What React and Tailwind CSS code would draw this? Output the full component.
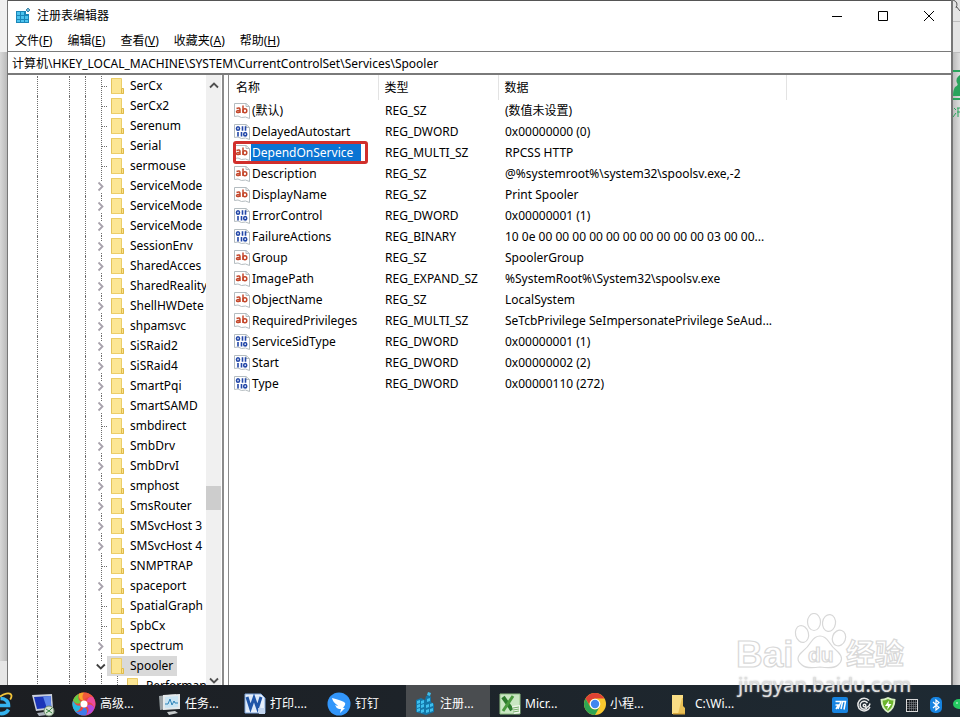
import React from 'react';

const MENUS = [
  { label: '文件', key: 'F' },
  { label: '编辑', key: 'E' },
  { label: '查看', key: 'V' },
  { label: '收藏夹', key: 'A' },
  { label: '帮助', key: 'H' }
];

const TREE = [
  { name: 'SerCx' },
  { name: 'SerCx2' },
  { name: 'Serenum' },
  { name: 'Serial' },
  { name: 'sermouse' },
  { name: 'ServiceMode', children: true },
  { name: 'ServiceMode', children: true },
  { name: 'ServiceMode', children: true },
  { name: 'SessionEnv', children: true },
  { name: 'SharedAcces', children: true },
  { name: 'SharedReality', children: true },
  { name: 'ShellHWDete', children: true },
  { name: 'shpamsvc', children: true },
  { name: 'SiSRaid2', children: true },
  { name: 'SiSRaid4', children: true },
  { name: 'SmartPqi', children: true },
  { name: 'SmartSAMD', children: true },
  { name: 'smbdirect' },
  { name: 'SmbDrv', children: true },
  { name: 'SmbDrvI', children: true },
  { name: 'smphost', children: true },
  { name: 'SmsRouter', children: true },
  { name: 'SMSvcHost 3', children: true },
  { name: 'SMSvcHost 4', children: true },
  { name: 'SNMPTRAP' },
  { name: 'spaceport', children: true },
  { name: 'SpatialGraph' },
  { name: 'SpbCx' },
  { name: 'spectrum', children: true },
  { name: 'Spooler', children: true, open: true },
  { name: 'Performan', nested: true }
];

const VALUES = [
  { name: '(默认)', type: 'REG_SZ', data: '(数值未设置)' },
  { name: 'DelayedAutostart', type: 'REG_DWORD', data: '0x00000000 (0)' },
  { name: 'DependOnService', type: 'REG_MULTI_SZ', data: 'RPCSS HTTP', selected: true },
  { name: 'Description', type: 'REG_SZ', data: '@%systemroot%\\system32\\spoolsv.exe,-2' },
  { name: 'DisplayName', type: 'REG_SZ', data: 'Print Spooler' },
  { name: 'ErrorControl', type: 'REG_DWORD', data: '0x00000001 (1)' },
  { name: 'FailureActions', type: 'REG_BINARY', data: '10 0e 00 00 00 00 00 00 00 00 00 00 03 00 00...' },
  { name: 'Group', type: 'REG_SZ', data: 'SpoolerGroup' },
  { name: 'ImagePath', type: 'REG_EXPAND_SZ', data: '%SystemRoot%\\System32\\spoolsv.exe' },
  { name: 'ObjectName', type: 'REG_SZ', data: 'LocalSystem' },
  { name: 'RequiredPrivileges', type: 'REG_MULTI_SZ', data: 'SeTcbPrivilege SeImpersonatePrivilege SeAud...' },
  { name: 'ServiceSidType', type: 'REG_DWORD', data: '0x00000001 (1)' },
  { name: 'Start', type: 'REG_DWORD', data: '0x00000002 (2)' },
  { name: 'Type', type: 'REG_DWORD', data: '0x00000110 (272)' }
];

// Window and tree icons
const RegeditIcon = () => (
  <svg className="h-4 w-4" viewBox="0 0 16 16">
    <path d="M1 3h10v3h3v9H1z" fill="#1b86b8" />
    <path d="M2 4h3v3H2zM6 4h3v3H6zM2 8h3v3H2zM6 8h3v3H6zM10 8h3v3h-3zM2 12h3v2H2zM6 12h3v2H6zM10 12h3v2h-3z" fill="#4cc3ee" />
    <path d="M13 0l2 2-2 2-2-2z" fill="#6fb7d6" stroke="#28749a" strokeWidth=".8" />
  </svg>
);

const FolderIcon = () => (
  <svg className="h-4 w-[13px] shrink-0" viewBox="0 0 13 16">
    <path d="M.5.5h10v9.500l2 1v4.500H.5z" fill="#fce694" stroke="#ecce68" />
    <path d="M10.500 10.500h2v5h-2z" fill="#fbe08a" stroke="#dfbb4b" />
    <path d="M.5.500v15" stroke="#e3c35c" />
  </svg>
);

const NodeGlyph = ({ item }) => (
  <svg className="h-5 w-[11px] shrink-0" viewBox="0 0 11 20" fill="none">
    {item.children ? (
      <path d="M5.500 0v5M5.500 17v3" stroke="#6e6e6e" strokeDasharray="1 1" />
    ) : (
      <path d="M5.500 0v20M6 10.500h5" stroke="#6e6e6e" strokeDasharray="1 1" />
    )}
    {item.children && !item.open && <path d="M2.500 6.500l4 4-4 4" stroke="#a8a2ac" strokeWidth="1.800" />}
    {item.open && <path d="M.8 8.500l4 4 4-4" stroke="#404040" strokeWidth="1.800" />}
  </svg>
);

const ValueIcon = ({ type }) => {
  const binary = type === 'REG_DWORD' || type === 'REG_BINARY';
  return (
    <svg className="h-4 w-4 shrink-0" viewBox="0 0 16 16" fill="none">
      <path d="M.5.500h11.500l3.500 3v12l-4-1.500-4 .5-3.500-1.500-3.500.5z" fill="#fff" stroke="#b4bcc0" />
      <path d="M12 .5v3h3.500" stroke="#b4bcc0" />
      {binary ? (
        <g stroke="#2347a8" strokeWidth="1.600">
          <ellipse cx="4" cy="4.500" rx="1.500" ry="1.700" />
          <path d="M8.500 2.200v4.500M11.500 2.200v4.500M4 8v4.500M7.500 8v4.500" />
          <ellipse cx="11.200" cy="10.200" rx="1.500" ry="1.700" />
        </g>
      ) : (
        <g stroke="#c4472b" strokeWidth="1.500">
          <path d="M2.500 5.500q3.500-1.500 3.500 1V10M6 7.500q-3.500-.3-3.500 1.200t3.500.3" />
          <path d="M9 2.500V10" />
          <ellipse cx="10.900" cy="7.700" rx="1.900" ry="2" />
        </g>
      )}
    </svg>
  );
};

// Taskbar icons
const ExplorerBrowserIcon = () => (
  <svg className="h-6 w-[13px]" viewBox="11 0 13 24" fill="none">
    <path d="M4 13.500h15.500C19.500 9 16 6.500 11.500 6.500M19.500 17.500c-2 3.500-5 4.500-9 4" stroke="#35b3ee" strokeWidth="3.600" />
    <path d="M11 4.500c4-3 9-4 11-2 1 1.200.5 3-.8 5" stroke="#f3c53b" strokeWidth="1.800" />
  </svg>
);

const MonitorIcon = () => (
  <svg className="h-6 w-6" viewBox="0 0 24 24">
    <path d="M0 2l20-1 1 15-17 2z" fill="#c9cfdd" />
    <path d="M2 4l16.500-1 .8 11.500L5 16z" fill="#1c35b8" />
    <path d="M11 3.500l7.500-.5.800 11.500-4.500.4z" fill="#5e86ea" />
    <path d="M5 20l7-1 3 3-8 1z" fill="#aab1bb" />
    <circle cx="17" cy="18" r="5" fill="#d6e3d2" stroke="#718a70" />
    <path d="M14 16l3 2-3 2M20 15l-3 3 3 2" stroke="#378344" fill="none" />
  </svg>
);

const PinwheelIcon = () => (
  <svg className="-ml-0.5 h-6 w-6" viewBox="0 0 24 24">
    <circle cx="12" cy="12" r="11.500" fill="#e8483f" />
    <path d="M12 .5A11.500 11.500 0 0 1 21 5Q14 4 12 9 8 5 12 .5" fill="#f05a3c" />
    <path d="M21 5a11.500 11.500 0 0 1 1.500 11Q20 9 14.500 10 16 4 21 5" fill="#ec4a9c" />
    <path d="M22.500 16A11.500 11.500 0 0 1 14 23.300Q19 17 14.500 14 19 10 22.500 16" fill="#b348e0" />
    <path d="M14 23.300A11.500 11.500 0 0 1 3.500 20Q11 20 11.500 15 17 17 14 23.300" fill="#3f7bea" />
    <path d="M3.500 20A11.500 11.500 0 0 1 1 8.500Q4 15 9 13.500 8 19 3.500 20" fill="#27b7df" />
    <path d="M1 8.500A11.500 11.500 0 0 1 7 1.700Q5 8 9.500 10 5 14 1 8.500" fill="#63cc45" />
    <path d="M7 1.700A11.500 11.500 0 0 1 12 .5Q9 5 12 9 6 8 7 1.700" fill="#f7a62a" />
    <circle cx="12" cy="12" r="3.500" fill="#fff" />
  </svg>
);

const TaskManagerIcon = () => (
  <svg className="h-6 w-[22px]" viewBox="0 0 22 24">
    <path d="M0 4l17-2v14L1 18z" fill="#9aa1a5" />
    <path d="M4 3l17-1v15l-17 1z" fill="#e4e9eb" />
    <path d="M6 5l13-1v11L6 16z" fill="#c9e4f3" />
    <path d="M6 12h3l2-5 2 6 2-4 1 2h3" stroke="#2d83b8" fill="none" />
    <path d="M8 20l8-1 3 2-9 2z" fill="#c8cccd" />
  </svg>
);

const WordIcon = () => (
  <svg className="h-6 w-[22px]" viewBox="0 0 22 24">
    <path d="M1 2h16l4 4v15H1z" fill="#e8f0fb" stroke="#7ea6dc" />
    <path d="M2 4h15v14H2z" fill="#dbe8f8" />
    <path d="M3 5l3.500 11L10 6l3.500 10L17 5" stroke="#1f55a8" strokeWidth="3" fill="none" />
    <path d="M14 16h7v6h-6z" fill="#c2d5ef" />
  </svg>
);

const DingIcon = () => (
  <svg className="-ml-0.5 h-6 w-6" viewBox="0 0 24 24">
    <circle cx="12" cy="12" r="11.500" fill="#3296fa" />
    <path d="M5 6q8 2 12 4 2 1 1 3l-2 3h2l-5 5 1-4h-2q-3-1-4-4 2 1 3 .5Q6 11 5 6z" fill="#fff" />
  </svg>
);

const CubesIcon = () => (
  <svg className="h-6 w-[22px]" viewBox="0 0 22 24">
    <path d="M2 8l5-2 4 2 1-4 3-1 2 2v5l3 2v8l-8 3-10-3z" fill="#1376a8" />
    <path d="M3 9l3-1v3l-3 1zM7 9l3-1v3l-3 1zM3 13l3-1v3l-3 1zM7 13l3-1v3l-3 1zM3 17l3-1v3l-3 1zM7 18l3-1v3l-3 1zM12 13l3-1v3l-3 1zM16 12l3-1v3l-3 1zM12 18l3-1v3l-3 1zM16 17l3-1v3l-3 1zM13 7l3-1v3l-3 1zM14 0l3 1-1 3-3-1z" fill="#3fc0ee" />
  </svg>
);

const ExcelIcon = () => (
  <svg className="h-6 w-[22px]" viewBox="0 0 22 24">
    <path d="M1 2h20v20H1z" fill="#c9e6c2" stroke="#8ebf83" />
    <path d="M4 5l9 13" stroke="#2c7a2c" strokeWidth="4" />
    <path d="M14 4L4 19" stroke="#4a9a3e" strokeWidth="3" />
    <path d="M13 14l8-1v8l-6 1z" fill="#eef6ea" />
    <path d="M14 16l6-1M14 18l6-1M14 20l6-1" stroke="#75ad69" />
  </svg>
);

const ChromeIcon = () => (
  <svg className="h-6 w-[22px]" viewBox="0 0 22 24">
    <circle cx="11" cy="12" r="11" fill="#f9c92e" />
    <path d="M1.500 6.500A11 11 0 0 1 20.500 6.500H11a5.500 5.500 0 0 0-4.800 8.300z" fill="#df4234" />
    <path d="M1.500 6.500A11 11 0 0 0 11 23l4.700-8.300a5.500 5.500 0 0 1-9.500 0z" fill="#2fa553" />
    <circle cx="11" cy="12" r="5.300" fill="#fff" />
    <circle cx="11" cy="12" r="4.200" fill="#4286ef" />
  </svg>
);

const FolderTaskIcon = () => (
  <svg className="h-6 w-[22px]" viewBox="0 0 22 24">
    <path d="M3 3h11v19H3z" fill="#f9dd85" />
    <path d="M13 6h1v8l2 2v6H9z" fill="#e9bf55" />
    <path d="M4 21h12v1.500H4z" fill="#d9a93f" />
  </svg>
);

const TASKS = [
  { label: '高级...', icon: PinwheelIcon },
  { label: '任务...', icon: TaskManagerIcon },
  { label: '打印....', icon: WordIcon },
  { label: '钉钉', icon: DingIcon },
  { label: '注册...', icon: CubesIcon, active: true },
  { label: 'Micr...', icon: ExcelIcon },
  { label: '小程...', icon: ChromeIcon },
  { label: 'C:\\Wi...', icon: FolderTaskIcon }
];

const TrayIcons = () => (
  <div className="flex items-center gap-2 pt-2">
    <svg className="h-4 w-4" viewBox="0 0 16 16">
      <rect width="16" height="16" rx="2" fill="#1683e0" />
      <path d="M3.500 4.500h5.500L6 12M3.500 8h3L4 12M10 4.500h3.500L12 12.500M10.500 5L9 12" stroke="#fff" strokeWidth="1.500" fill="none" />
    </svg>
    <svg className="h-4 w-4" viewBox="0 0 16 16" fill="none" stroke="#e8e8e8" strokeWidth="1.500">
      <path d="M13 3.500A6.300 6.300 0 1 0 14 10M11.500 6A4 4 0 1 0 11 11M14 6.500Q13 11 9 10" />
      <circle cx="8.500" cy="8.500" r="1.300" />
    </svg>
    <svg className="h-4 w-4" viewBox="0 0 16 16">
      <path d="M8 0q4 2 7.500 2 0 10-7.500 14Q.5 12 .5 2 4 2 8 0z" fill="#d9efc2" />
      <path d="M8 2q3 1.500 5.500 1.500Q13 11 8 14 3 11 2.500 3.500 5 3.500 8 2z" fill="#6cb52c" />
      <path d="M9 3.500L5 9h3l-1 4 4.500-6h-3z" fill="#fff" />
    </svg>
    <svg className="h-4 w-4" viewBox="0 0 16 16">
      <rect x="2.500" y="2.500" width="11" height="12" fill="#14181c" stroke="#d8d8d8" />
      <path d="M5.500 3v11M7.500 3v11M9.500 3v11M11.500 3v11M3 5.500h10M3 7.500h10M3 9.500h10M3 11.500h10" stroke="#7e8388" strokeWidth=".6" />
    </svg>
    <svg className="h-4 w-4" viewBox="0 0 16 16">
      <rect x="2" width="12" height="16" rx="5" fill="#1683e0" />
      <path d="M5 5l6 5.500-3 2.500V3l3 2.500L5 11" stroke="#fff" strokeWidth="1.200" fill="none" />
    </svg>
    <svg className="h-4 w-2" viewBox="0 0 8 16">
      <ellipse cx="7" cy="7" rx="6" ry="5" fill="#25ca62" />
      <circle cx="5" cy="6" r=".8" fill="#fff" />
    </svg>
  </div>
);

const TitleBar = () => (
  <header className="flex h-[29px] items-center gap-1.5 pl-[7px]">
    <RegeditIcon />
    <h1 className="flex-1">注册表编辑器</h1>
    <div className="flex h-full">
      <button aria-label="最小化" className="flex w-[46px] items-center justify-center">
        <svg className="h-3 w-3" viewBox="0 0 12 12"><path d="M1 6.500h10" stroke="#000" /></svg>
      </button>
      <button aria-label="最大化" className="flex w-[46px] items-center justify-center">
        <svg className="h-3 w-3" viewBox="0 0 12 12"><path d="M1.500 1.500h9v9h-9z" fill="none" stroke="#000" /></svg>
      </button>
      <button aria-label="关闭" className="flex w-[45px] items-center justify-center">
        <svg className="h-3 w-3" viewBox="0 0 12 12"><path d="M1 1l10 10M11 1L1 11" stroke="#000" /></svg>
      </button>
    </div>
  </header>
);

const MenuBar = () => (
  <nav className="flex h-[21px] items-center gap-[15px] pl-[7px]">
    {MENUS.map((menu) => (
      <button key={menu.key}>
        {menu.label}(<u className="underline-offset-1">{menu.key}</u>)
      </button>
    ))}
  </nav>
);

const TreePane = () => (
  <div className="flex w-[216px] shrink-0 border-r-2 border-[#8b8b8b]">
    <ul role="tree" className="w-[198px] shrink-0 overflow-hidden pt-px">
      {TREE.map((item, index) => (
        <li key={index} role="treeitem" className="flex h-5 items-center whitespace-nowrap">
          <span className="h-full w-[29px] shrink-0" />
          <span className="h-full w-8 shrink-0 border-l border-dotted border-[#6e6e6e]" />
          <span className="h-full w-4 shrink-0 border-l border-dotted border-[#6e6e6e]" />
          <span className="h-full w-[11px] shrink-0 border-l border-dotted border-[#6e6e6e]" />
          {item.nested && <span className="ml-[5px] h-full w-[11px] shrink-0 border-l border-dotted border-[#6e6e6e]" />}
          <NodeGlyph item={item} />
          <span className={`flex h-5 items-center gap-1.5 pr-1 pl-1 ${item.open ? 'bg-[#d9d9d9]' : ''}`}>
            <FolderIcon />
            {item.name}
          </span>
        </li>
      ))}
    </ul>
    <div className="flex w-[15px] flex-col items-center bg-[#f0f0f0] py-1.5">
      <svg className="h-2 w-2.5" viewBox="0 0 10 8"><path d="M1 6.500l4-4 4 4" fill="none" stroke="#505050" strokeWidth="1.800" /></svg>
      <div className="h-[397px]" />
      <div className="h-6 w-full bg-[#cdcdcd]" />
      <div className="flex-1" />
      <svg className="-mb-1.5 h-2 w-2.5" viewBox="0 0 10 8"><path d="M1 1.500l4 4 4-4" fill="none" stroke="#505050" strokeWidth="1.800" /></svg>
    </div>
  </div>
);

const ValueList = () => (
  <div className="ml-1 min-w-0 flex-1 border-l border-[#8b8b8b] overflow-hidden">
    <table className="w-full table-fixed border-collapse text-left whitespace-nowrap">
      <colgroup>
        <col className="w-[149px]" />
        <col className="w-[120px]" />
        <col className="w-72" />
        <col />
      </colgroup>
      <thead>
        <tr className="h-[25px]">
          <th className="border-r border-[#e3e3e3] pl-[7px] font-normal">名称</th>
          <th className="border-r border-[#e3e3e3] pl-1.5 font-normal">类型</th>
          <th className="border-r border-[#e3e3e3] pl-1.5 font-normal">数据</th>
          <td />
        </tr>
      </thead>
      <tbody>
        {VALUES.map((value) => (
          <tr key={value.name} className="h-[21px]">
            <td className="p-0 pl-[5px]">
              <div className="relative flex items-center">
                <ValueIcon type={value.type} />
                <span className={value.selected ? 'ml-px bg-[#0a74d3] pr-2 pl-px leading-[17px] text-white' : 'pl-0.5 leading-[17px]'}>
                  {value.name}
                </span>
                {value.selected && <span className="absolute -inset-y-[3px] right-2.5 -left-px rounded-[3px] border-3 border-[#d12f2c]" />}
              </div>
            </td>
            <td className="p-0 pl-[7px]">{value.type}</td>
            <td className="p-0 pl-[7px]">{value.data}</td>
            <td />
          </tr>
        ))}
      </tbody>
    </table>
  </div>
);

const Taskbar = () => (
  <footer className="flex h-8 shrink-0 items-center justify-between bg-linear-to-r from-[#1c1e22] to-[#1e2a33] text-white">
    <div className="flex h-full items-center">
      <button aria-label="Internet Explorer" className="pt-1.5"><ExplorerBrowserIcon /></button>
      <button aria-label="远程桌面" className="mr-2.5 ml-[19px] pt-2"><MonitorIcon /></button>
      <div className="flex h-full gap-px">
        {TASKS.map(({ label, icon: Icon, active }) => (
          <button
            key={label}
            className={`flex w-[84px] items-center gap-1 pt-1.5 pl-2 whitespace-nowrap ${active ? 'bg-[#4a4d50]' : ''}`}
          >
            <Icon />
            {label}
          </button>
        ))}
      </div>
    </div>
    <TrayIcons />
  </footer>
);

const Watermark = () => (
  <div className="pointer-events-none absolute right-[50px] bottom-5 w-[174px]">
    <svg
      className="h-[60px] w-[174px]"
      viewBox="0 0 174 60"
      fill="#fff"
      stroke="#d8d8d8"
      strokeWidth="1.200"
      fontFamily="'Liberation Sans', 'Noto Sans CJK SC', sans-serif"
      fontWeight="700"
    >
      <text x="0" y="54" fontSize="37">Bai</text>
      <ellipse cx="66" cy="21" rx="6.500" ry="8.500" transform="rotate(-15 66 21)" />
      <ellipse cx="78" cy="9" rx="6.500" ry="8.500" />
      <ellipse cx="93" cy="10" rx="6.500" ry="8.500" transform="rotate(8 93 10)" />
      <ellipse cx="103" cy="25" rx="6.500" ry="8" transform="rotate(20 103 25)" />
      <path d="M84 23q5 0 9 6 3 5 9 10 7 7 0 13-4 4-18 2-14 2-18-2-8-6 0-13 6-5 9-10 4-6 9-6z" />
      <text x="72" y="49" fontSize="21">du</text>
      <text x="110" y="52" fontSize="29">经验</text>
    </svg>
    <p className="pl-0.5 text-xl leading-6 text-[#e0e0e0] [text-shadow:0_0_2px_#aaa]">
      jingyan.baidu.com
    </p>
  </div>
);

export default function App() {
  return (
    <div className="relative flex h-screen flex-col overflow-hidden bg-[#d6d6d6] font-['Noto_Sans','Noto_Sans_CJK_SC',sans-serif] text-xs text-black">
      <main className="flex min-h-0 flex-1">
        <div className="flex w-2 shrink-0 flex-col border-r border-[#777]">
          <div className="h-[52px] bg-[#f0f0f0]" />
          <div className="flex-1 bg-linear-to-r from-[#d8d8d8] to-[#bababa]" />
          <div className="h-6 bg-[#e6e6e6]" />
        </div>
        <section className="flex min-w-0 flex-1 flex-col border-t border-[#555] bg-white">
          <TitleBar />
          <MenuBar />
          <input
            aria-label="地址"
            className="h-[24px] shrink-0 border-y border-b-2 border-[#7a7a7a] pl-1 outline-none"
            defaultValue="计算机\HKEY_LOCAL_MACHINE\SYSTEM\CurrentControlSet\Services\Spooler"
          />
          <div className="flex min-h-0 flex-1">
            <TreePane />
            <ValueList />
          </div>
        </section>
        <aside className="flex w-[9px] shrink-0 flex-col overflow-hidden border-l-2 border-[#777] bg-linear-to-r from-[#bcbcbc] to-[#dedede]">
          <svg className="h-[120px] w-[7px]" viewBox="0 0 7 120" fill="none">
            <path d="M0 0h7v52H0z" fill="#e4e4e4" />
            <path d="M0 21.500h7M0 52.500h7" stroke="#bdbdbd" />
            <path d="M0 0q6 2 3 8M3 6l4 5" stroke="#555" />
            <path d="M0 71h7M0 99h7" stroke="#2aa45c" strokeWidth="2" />
            <path d="M7 75q-5 3-3 8 2 2-2 4-2 3-2 9h7z" fill="#2aa45c" />
            <path d="M1 108l2 2M0 117l3-4M4 108h3M4 112h3M5 108v9" stroke="#2aa45c" />
          </svg>
        </aside>
      </main>
      <Taskbar />
      <Watermark />
    </div>
  );
}
